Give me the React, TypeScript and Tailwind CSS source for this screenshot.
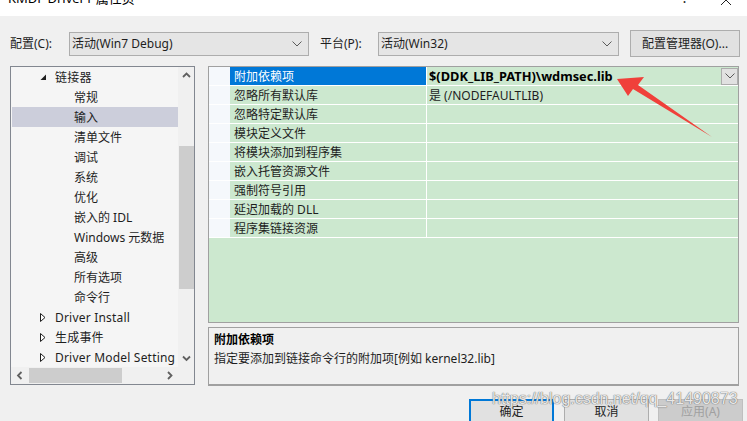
import React from "react";

type TreeItem = { label: string; level: 1 | 2; icon?: "open" | "closed"; selected?: boolean };

const treeItems: TreeItem[] = [
  { label: "链接器", level: 1, icon: "open" },
  { label: "常规", level: 2 },
  { label: "输入", level: 2, selected: true },
  { label: "清单文件", level: 2 },
  { label: "调试", level: 2 },
  { label: "系统", level: 2 },
  { label: "优化", level: 2 },
  { label: "嵌入的 IDL", level: 2 },
  { label: "Windows 元数据", level: 2 },
  { label: "高级", level: 2 },
  { label: "所有选项", level: 2 },
  { label: "命令行", level: 2 },
  { label: "Driver Install", level: 1, icon: "closed" },
  { label: "生成事件", level: 1, icon: "closed" },
  { label: "Driver Model Setting", level: 1, icon: "closed" },
];

const props: { name: string; value?: string; selected?: boolean; bold?: boolean }[] = [
  { name: "附加依赖项", value: "$(DDK_LIB_PATH)\\wdmsec.lib", selected: true, bold: true },
  { name: "忽略所有默认库", value: "是 (/NODEFAULTLIB)" },
  { name: "忽略特定默认库" },
  { name: "模块定义文件" },
  { name: "将模块添加到程序集" },
  { name: "嵌入托管资源文件" },
  { name: "强制符号引用" },
  { name: "延迟加载的 DLL" },
  { name: "程序集链接资源" },
];

function ThinChevron() {
  return (
    <svg width="10" height="6" viewBox="0 0 10 6" className="shrink-0">
      <polyline points="0.5,0.5 5,5 9.5,0.5" fill="none" stroke="#5a5a5a" strokeWidth="1" />
    </svg>
  );
}

function ScrollArrow({ dir }: { dir: "up" | "down" | "left" | "right" }) {
  const pts =
    dir === "up"
      ? "1,5 4.5,1.5 8,5"
      : dir === "down"
      ? "1,1.5 4.5,5 8,1.5"
      : dir === "left"
      ? "5.5,1 2,4.5 5.5,8"
      : "2,1 5.5,4.5 2,8";
  const w = dir === "up" || dir === "down" ? 9 : 8;
  const h = dir === "up" || dir === "down" ? 7 : 9;
  return (
    <svg width={w} height={h} viewBox={`0 0 ${w} ${h}`}>
      <polyline points={pts} fill="none" stroke="#606060" strokeWidth="1.8" />
    </svg>
  );
}

function TreeIcon({ kind }: { kind: "open" | "closed" }) {
  if (kind === "open") {
    return (
      <svg width="7" height="7" viewBox="0 0 7 7">
        <polygon points="6,0.5 6,6 0.5,6" fill="#1e1e1e" />
      </svg>
    );
  }
  return (
    <svg width="6" height="9" viewBox="0 0 6 9">
      <polygon points="0.5,0.5 5,4.5 0.5,8.5" fill="#ffffff" stroke="#1e1e1e" strokeWidth="1" />
    </svg>
  );
}

function Dropdown({ text, width }: { text: string; width: string }) {
  return (
    <div
      className={`${width} h-[24px] border border-[#adadad] bg-[#e5e5e5] flex items-center justify-between pl-[2px] pr-[6px]`}
    >
      <span className="whitespace-nowrap">{text}</span>
      <ThinChevron />
    </div>
  );
}

export default function App() {
  return (
    <div className="relative w-[747px] h-[421px] overflow-hidden bg-[#f0f0f0] text-[12px] leading-[17px] text-[#1e1e1e] font-[family-name:'Noto_Sans','Noto_Sans_CJK_SC',sans-serif]">
      {/* window caption */}
      <div className="h-[16px] bg-white flex items-start overflow-hidden">
        <span className="ml-[8px] mt-[-10px] text-[13px] leading-[17px] text-black whitespace-nowrap">
          KMDF Driver1 属性页
        </span>
        <span className="ml-auto mt-[-11px] text-[14px] leading-[17px] text-[#222]">?</span>
        <svg width="12" height="12" viewBox="0 0 12 12" className="ml-[32px] mr-[15px] mt-[-6px]">
          <line x1="1" y1="1" x2="11" y2="11" stroke="#222" strokeWidth="1" />
          <line x1="11" y1="1" x2="1" y2="11" stroke="#222" strokeWidth="1" />
        </svg>
      </div>

      {/* configuration / platform bar */}
      <div className="mt-[14px] h-[27px] flex items-center pl-[10px]">
        <span className="w-[59px] whitespace-nowrap">配置(C):</span>
        <Dropdown text="活动(Win7 Debug)" width="w-[240px]" />
        <span className="ml-[11px] w-[58px] whitespace-nowrap">平台(P):</span>
        <Dropdown text="活动(Win32)" width="w-[241px]" />
        <button className="ml-[11px] w-[110px] h-[27px] border border-[#adadad] bg-[#e1e1e1] text-[12px] text-[#1e1e1e]">
          配置管理器(O)...
        </button>
      </div>

      {/* main area */}
      <div className="mt-[9px] flex pl-[10px]">
        {/* navigation tree */}
        <div className="w-[185px] h-[319px] border border-[#828790] flex flex-col">
          <div className="flex flex-1 min-h-0">
            <div className="flex-1 bg-[#f5f5f5] overflow-hidden">
              {treeItems.map((it) => (
                <div
                  key={it.label}
                  className={`h-[20px] flex items-center whitespace-nowrap ${
                    it.selected ? "bg-[#cccedb] ml-[1px]" : ""
                  } ${it.level === 1 ? "pl-[29px]" : it.selected ? "pl-[62px]" : "pl-[63px]"}`}
                >
                  {it.icon && (
                    <span className="w-[15px] flex items-center">
                      <TreeIcon kind={it.icon} />
                    </span>
                  )}
                  <span className={it.level === 1 ? "tracking-[0.2px]" : ""}>{it.label}</span>
                </div>
              ))}
            </div>
            <div className="w-[16px] bg-[#f0f0f0] flex flex-col">
              <div className="h-[17px] flex items-center justify-center">
                <ScrollArrow dir="up" />
              </div>
              <div className="flex-1">
                <div className="mt-[62px] ml-[1px] h-[143px] bg-[#cdcdcd]" />
              </div>
              <div className="h-[17px] flex items-center justify-center">
                <ScrollArrow dir="down" />
              </div>
            </div>
          </div>
          <div className="h-[17px] flex bg-[#f0f0f0]">
            <div className="flex-1 flex items-center">
              <div className="w-[17px] flex justify-center">
                <ScrollArrow dir="left" />
              </div>
              <div className="ml-[1px] w-[93px] h-[15px] bg-[#cdcdcd]" />
              <div className="ml-auto w-[17px] flex justify-center">
                <ScrollArrow dir="right" />
              </div>
            </div>
            <div className="w-[16px]" />
          </div>
        </div>

        {/* property grid + description */}
        <div className="ml-[13px] w-[531px] flex flex-col">
          <div className="h-[257px] border border-[#a0a0a0] bg-[#cce8cf] flex flex-col">
            {props.map((p) => (
              <div key={p.name} className="h-[19px] flex border-b border-white">
                <div className="w-[21px] bg-[#f5f8fc]" />
                <div
                  className={`w-[196px] pl-[4px] flex items-center whitespace-nowrap ${
                    p.selected ? "bg-[#0078d7] text-white" : ""
                  }`}
                >
                  {p.name}
                </div>
                <div className="flex-1 border-l border-white pl-[2px] flex items-center justify-between whitespace-nowrap">
                  <span className={p.bold ? "font-bold text-black text-[12.8px]" : ""}>{p.value ?? ""}</span>
                  {p.selected && (
                    <div className="w-[17px] h-[17px] border border-[#adadad] bg-[#e1e1e1] flex items-center justify-center">
                      <ThinChevron />
                    </div>
                  )}
                </div>
              </div>
            ))}
          </div>
          <div className="mt-[4px] h-[59px] border border-b-2 border-[#a0a0a0] bg-[#f0f0f0] pl-[5px] pt-[3px]">
            <div className="font-bold text-black leading-[18px]">附加依赖项</div>
            <div className="leading-[19px]">指定要添加到链接命令行的附加项[例如 kernel32.lib]</div>
          </div>
        </div>
      </div>

      {/* dialog buttons */}
      <div className="mt-[13px] flex pl-[469px]">
        <button className="w-[85px] h-[24px] border-2 border-[#0078d7] bg-[#e1e1e1] text-[12px] text-[#1e1e1e]">
          确定
        </button>
        <button className="ml-[10px] w-[85px] h-[24px] border border-[#adadad] bg-[#e1e1e1] text-[12px] text-[#1e1e1e]">
          取消
        </button>
        <button className="ml-[9px] w-[85px] h-[24px] border border-[#bfbfbf] bg-[#cccccc] text-[12px] text-[#a0a0a0]">
          应用(A)
        </button>
      </div>

      {/* annotation arrow */}
      <svg className="absolute left-0 top-0 pointer-events-none" width="747" height="421" viewBox="0 0 747 421">
        <polygon points="617,79 644,77 638,85 712,137 633,89 628,96" fill="#f0403a" />
      </svg>

      {/* blog watermark */}
      <div className="absolute left-[492px] top-[389px] text-[16px] leading-[20px] whitespace-nowrap font-[family-name:'Liberation_Sans',sans-serif] text-[rgba(255,255,255,0.85)] [text-shadow:0_0_1px_#6a6a6a,0_0_1px_#6a6a6a]">
        https://blog.csdn.net/qq_41490873
      </div>
    </div>
  );
}
